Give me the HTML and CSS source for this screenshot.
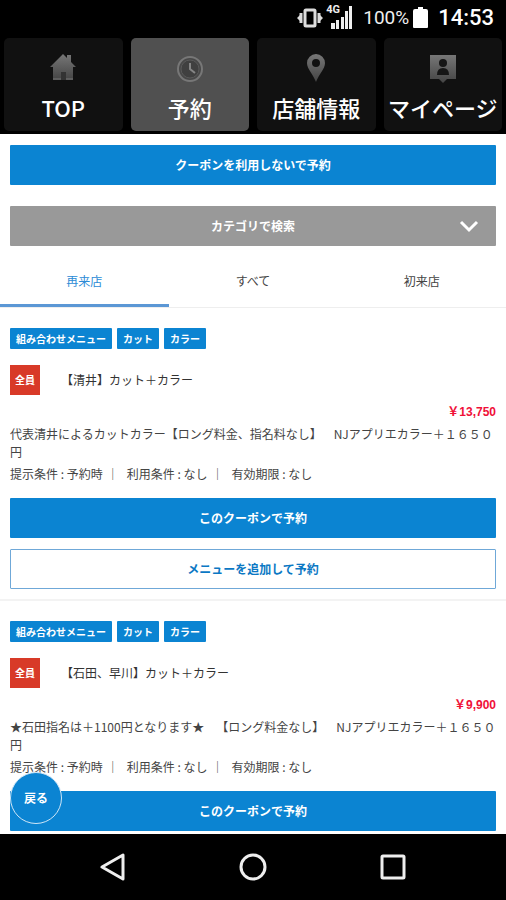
FILE: index.html
```html
<!DOCTYPE html>
<html lang="ja">
<head>
<meta charset="utf-8">
<meta name="viewport" content="width=device-width, initial-scale=1">
<title>予約</title>
<link rel="stylesheet" href="styles.css">
</head>
<body>
<header>
  <div class="status">
    <svg class="vibrate" width="26" height="20" viewBox="0 0 26 20" aria-hidden="true"><path d="M0 10l3-3v6zM26 10l-3-3v6z" fill="#ddd"/><path d="M4 5v10M22 5v10" stroke="#ddd" stroke-width="3"/><rect x="8" y="2" width="10" height="16" rx="1" fill="none" stroke="#ddd" stroke-width="3"/></svg>
    <span class="signal">
      <svg width="23" height="24" viewBox="0 0 23 24" aria-hidden="true"><path d="M2 17h4v6H2zM7 14h3v9H7zM12 11h3v12h-3zM16 5h3v18h-3zM20 0h3v23h-3z" fill="#eee"/></svg>
      <span class="network">4G</span>
    </span>
    <span class="percent">100%</span>
    <svg class="battery" width="15" height="22" viewBox="0 0 15 22" aria-hidden="true"><path d="M5 0h5v2h3q2 0 2 2v16q0 1-1 1H1q-1 0-1-1V4q0-2 2-2h3z" fill="#fff"/></svg>
    <time class="clock">14:53</time>
  </div>
  <nav class="main-nav">
    <a href="#top">
      <svg width="28" height="30" viewBox="0 0 28 30" aria-hidden="true"><defs><linearGradient id="shade" x1="0" y1="0" x2="0" y2="1"><stop offset="0" stop-color="#777"/><stop offset="1" stop-color="#444"/></linearGradient></defs><path d="M14 1l4 4V2h4v7l5 5h-3v13h-7v-8h-5v8H4V14H1z" fill="url(#shade)"/><path d="M12 19h5v8h-5z" fill="#333"/><path d="M4 26h8M17 26h7" stroke="#777"/></svg>
      <span>TOP</span>
    </a>
    <a href="#reserve" class="current" aria-current="page">
      <svg width="28" height="30" viewBox="0 0 28 30" aria-hidden="true"><circle cx="14" cy="16" r="12" fill="#484848" stroke="#777" stroke-width="2"/><circle cx="14" cy="16" r="9" fill="#404040" stroke="#5a5a5a"/><path d="M14 10v6l5 4" fill="none" stroke="#858585" stroke-width="2"/></svg>
      <span>予約</span>
    </a>
    <a href="#shop">
      <svg width="28" height="30" viewBox="0 0 28 30" aria-hidden="true"><path fill-rule="evenodd" d="M14 1a9 9 0 0 1 9 9c0 6-6 11-9 19C11 21 5 16 5 10a9 9 0 0 1 9-9zm0 5a4 4 0 1 0 0 8 4 4 0 0 0 0-8z" fill="url(#shade)"/></svg>
      <span>店舗情報</span>
    </a>
    <a href="#mypage">
      <svg width="28" height="30" viewBox="0 0 28 30" aria-hidden="true"><path d="M1 2h26v24h-9l-4 4-4-4H1z" fill="url(#shade)"/><circle cx="14" cy="10" r="4" fill="#151515"/><path d="M8 22q0-7 6-7t6 7z" fill="#151515"/></svg>
      <span>マイページ</span>
    </a>
  </nav>
</header>
<main>
  <div class="actions">
    <button type="button" class="btn">クーポンを利用しないで予約</button>
    <button type="button" class="btn category">カテゴリで検索
      <svg class="chevron" width="20" height="14" viewBox="0 0 20 14" aria-hidden="true"><path d="M2 2l8 8 8-8" fill="none" stroke="#fff" stroke-width="3"/></svg>
    </button>
  </div>
  <nav class="tabs">
    <a href="#repeat" class="selected">再来店</a>
    <a href="#all">すべて</a>
    <a href="#first">初来店</a>
  </nav>
  <article class="coupon">
    <div class="tags"><span>組み合わせメニュー</span><span>カット</span><span>カラー</span></div>
    <div class="heading"><span class="target">全員</span><h2>【清井】カット＋カラー</h2></div>
    <p class="price">￥13,750</p>
    <p class="description">代表清井によるカットカラー【ロング料金、指名料なし】　NJアプリエカラー＋１６５０円</p>
    <ul class="terms"><li>提示条件 : 予約時</li><li>利用条件 : なし</li><li>有効期限 : なし</li></ul>
    <button type="button" class="btn">このクーポンで予約</button>
    <button type="button" class="btn outline">メニューを追加して予約</button>
  </article>
  <article class="coupon">
    <div class="tags"><span>組み合わせメニュー</span><span>カット</span><span>カラー</span></div>
    <div class="heading"><span class="target">全員</span><h2>【石田、早川】カット＋カラー</h2></div>
    <p class="price">￥9,900</p>
    <p class="description">★石田指名は＋1100円となります★　【ロング料金なし】　NJアプリエカラー＋１６５０円</p>
    <ul class="terms"><li>提示条件 : 予約時</li><li>利用条件 : なし</li><li>有効期限 : なし</li></ul>
    <button type="button" class="btn">このクーポンで予約</button>
  </article>
  <button type="button" class="back">戻る</button>
</main>
<footer>
  <button type="button" aria-label="戻る"><svg width="28" height="28" viewBox="0 0 28 28"><path d="M3 14L24 2v24z" fill="none" stroke="#eee" stroke-width="3" stroke-linejoin="round"/></svg></button>
  <button type="button" aria-label="ホーム"><svg width="28" height="28" viewBox="0 0 28 28"><circle cx="14" cy="14" r="12" fill="none" stroke="#eee" stroke-width="3"/></svg></button>
  <button type="button" aria-label="履歴"><svg width="28" height="28" viewBox="0 0 28 28"><rect x="3" y="3" width="22" height="22" rx="1" fill="none" stroke="#eee" stroke-width="3"/></svg></button>
</footer>
</body>
</html>
```
FILE: styles.css
```css
* { box-sizing: border-box; }
body {
  margin: 0;
  min-height: 100vh;
  display: flex;
  flex-direction: column;
  background: #fff;
  color: #444;
  font: 12px/18px "Noto Sans CJK JP", sans-serif;
  text-spacing-trim: space-all;
}
h2, p, ul { margin: 0; padding: 0; }
a { color: inherit; text-decoration: none; }
button { font: inherit; cursor: pointer; }
svg { display: block; }

header { background: #000; color: #eee; }
.status {
  display: flex;
  align-items: center;
  justify-content: flex-end;
  height: 38px;
  padding: 0 12px 2px 0;
  font-family: Roboto, sans-serif;
}
.vibrate { margin-right: 6px; }
.signal { position: relative; margin-right: 11px; }
.network {
  position: absolute;
  left: -3px;
  top: -2px;
  font-size: 11px;
  font-weight: 700;
  line-height: 12px;
}
.percent { font-size: 19px; margin-right: 4px; }
.battery { margin-right: 10px; }
.clock { font-size: 22px; font-weight: 500; color: #fff; }
.main-nav {
  display: grid;
  grid-template-columns: repeat(4, 1fr);
  gap: 8px;
  padding: 0 4px 3px;
}
.main-nav a {
  display: flex;
  flex-direction: column;
  align-items: center;
  gap: 8px;
  height: 93px;
  padding-top: 15px;
  border-radius: 5px;
  background: #111;
  color: #fff;
  font-size: 22px;
  font-weight: 500;
  line-height: 32px;
  white-space: nowrap;
}
.main-nav .current { background: #505050; }

main { position: relative; flex: 1; }
.actions { display: grid; gap: 21px; padding: 11px 10px 0; }
.btn {
  display: block;
  position: relative;
  width: 100%;
  height: 40px;
  padding: 0;
  border: 0;
  border-radius: 1px;
  background: #0b84d2;
  color: #fff;
  font-weight: 700;
}
.category { background: #999; }
.chevron { position: absolute; right: 17px; top: 14px; }
.outline {
  margin-top: 11px;
  border: 1px solid #6fa8d8;
  background: #fff;
  color: #0b78c4;
}
.tabs {
  display: grid;
  grid-template-columns: repeat(3, 1fr);
  border-bottom: 1px solid #eee;
  text-align: center;
}
.tabs a { padding: 26px 0 14px; border-bottom: 3px solid transparent; }
.tabs .selected { border-color: #5b97d5; color: #2c8bd6; }

.coupon { padding: 20px 10px 10px; border-bottom: 2px solid #f3f3f3; }
.coupon:last-of-type { padding-bottom: 3px; border: 0; }
.tags { display: flex; gap: 5px; }
.tags span {
  height: 21px;
  padding: 0 6px;
  border-radius: 1px;
  background: #0b84d2;
  color: #fff;
  font-size: 10px;
  font-weight: 700;
  line-height: 21px;
}
.heading { display: flex; align-items: center; gap: 21px; margin-top: 16px; }
.target {
  width: 30px;
  height: 30px;
  background: #d83a28;
  color: #fff;
  font-size: 10px;
  font-weight: 700;
  line-height: 30px;
  text-align: center;
}
h2 { font-size: 12px; font-weight: 400; color: #333; }
.price {
  margin-top: 8px;
  color: #f01038;
  font-family: "Liberation Sans", "Noto Sans CJK JP", sans-serif;
  font-weight: 700;
  text-align: right;
}
.description { margin-top: 4px; }
.terms { display: flex; gap: 4px; margin: 4px 0 15px; list-style: none; }
.terms li + li::before { content: "｜"; margin-right: 8px; }
.back {
  position: absolute;
  left: 10px;
  bottom: 10px;
  width: 52px;
  height: 52px;
  padding: 0;
  border: 1px solid #cfe6f7;
  border-radius: 50%;
  background: #0b84d2;
  color: #fff;
  font-weight: 700;
}
footer {
  display: flex;
  justify-content: center;
  gap: 112px;
  height: 66px;
  background: #000;
}
footer button { padding: 0; border: 0; background: none; }
```
